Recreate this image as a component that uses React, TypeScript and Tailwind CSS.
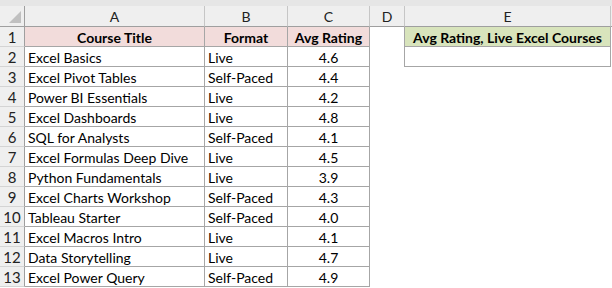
import React from 'react'

const courses: [string, string, string][] = [
  ['Excel Basics', 'Live', '4.6'],
  ['Excel Pivot Tables', 'Self-Paced', '4.4'],
  ['Power BI Essentials', 'Live', '4.2'],
  ['Excel Dashboards', 'Live', '4.8'],
  ['SQL for Analysts', 'Self-Paced', '4.1'],
  ['Excel Formulas Deep Dive', 'Live', '4.5'],
  ['Python Fundamentals', 'Live', '3.9'],
  ['Excel Charts Workshop', 'Self-Paced', '4.3'],
  ['Tableau Starter', 'Self-Paced', '4.0'],
  ['Excel Macros Intro', 'Live', '4.1'],
  ['Data Storytelling', 'Live', '4.7'],
  ['Excel Power Query', 'Self-Paced', '4.9'],
]

const font = { fontFamily: 'Lato, "Open Sans", sans-serif' }

// columns: row numbers, A, B, C, D, E
const cols = 'grid-cols-[25px_180px_83px_82px_35px_206px_1fr]'

function ColHead({ label }: { label: string }) {
  return (
    <div className="flex h-[21px] items-center justify-center border-b border-r border-[#c6c6c6] border-b-[#9f9f9f] bg-[#efefef] text-[14px] text-[#222]">
      {label}
    </div>
  )
}

function RowNum({ n }: { n: number }) {
  return (
    <div className="flex h-[20px] items-center justify-center border-b border-r border-[#d4d4d4] border-r-[#9f9f9f] bg-[#efefef] pt-[1px] text-[15px] text-[#222]">
      {n}
    </div>
  )
}

export default function App() {
  return (
    <div className="h-[288px] w-[612px] overflow-hidden bg-white" style={font}>
      <div className="h-[6px] bg-[#e6e6e6]" />
      <div className={`grid ${cols}`}>
        {/* corner */}
        <div className="relative h-[21px] border-b border-r border-[#9f9f9f] bg-[#efefef]">
          <svg className="absolute bottom-[3px] right-[3px]" width="12" height="12" viewBox="0 0 12 12">
            <polygon points="12,0 12,12 0,12" fill="#c0c0c0" />
          </svg>
        </div>
        <ColHead label="A" />
        <ColHead label="B" />
        <ColHead label="C" />
        <ColHead label="D" />
        <ColHead label="E" />
        <div className="h-[21px] border-b border-[#9f9f9f] bg-[#efefef]" />

        {/* row 1 */}
        <RowNum n={1} />
        <div className="flex h-[20px] items-center justify-center border-b border-r border-[#a6a6a6] bg-[#f2dcdb] pt-[1px] text-[14px] font-bold text-black">
          Course Title
        </div>
        <div className="flex h-[20px] items-center justify-center border-b border-r border-[#a6a6a6] bg-[#f2dcdb] pt-[1px] text-[14px] font-bold text-black">
          Format
        </div>
        <div className="flex h-[20px] items-center justify-center border-b border-r border-[#a6a6a6] bg-[#f2dcdb] pt-[1px] text-[14px] font-bold text-black">
          Avg Rating
        </div>
        <div className="h-[20px] border-r border-[#a6a6a6]" />
        <div className="flex h-[20px] items-center justify-center border-b border-r border-[#a6a6a6] bg-[#d8e4bc] pt-[1px] text-[14px] font-bold text-black">
          Avg Rating, Live Excel Courses
        </div>
        <div />

        {courses.map(([title, format, rating], i) => (
          <React.Fragment key={title}>
            <RowNum n={i + 2} />
            <div className="flex h-[20px] items-center border-b border-r border-[#a6a6a6] pl-[3px] pt-[1px] text-[14px] text-black">
              {title}
            </div>
            <div className="flex h-[20px] items-center border-b border-r border-[#a6a6a6] pl-[3px] pt-[1px] text-[14px] text-black">
              {format}
            </div>
            <div className="flex h-[20px] items-center justify-center border-b border-r border-[#a6a6a6] pt-[1px] text-[14px] text-black">
              {rating}
            </div>
            <div className={i === 0 ? 'h-[20px] border-r border-[#a6a6a6]' : 'h-[20px]'} />
            <div className={i === 0 ? 'h-[20px] border-b border-r border-[#a6a6a6]' : 'h-[20px]'} />
            <div />
          </React.Fragment>
        ))}
      </div>
    </div>
  )
}
